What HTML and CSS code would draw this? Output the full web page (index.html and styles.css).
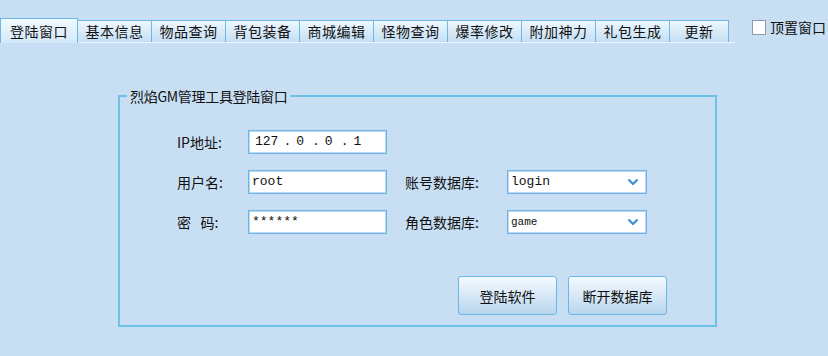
FILE: index.html
```html
<!DOCTYPE html>
<html lang="zh-CN">
  <head>
    <meta charset="UTF-8" />
    <meta name="viewport" content="width=device-width, initial-scale=1.0" />
    <title>烈焰GM管理工具</title>
    <link rel="stylesheet" href="styles.css">
  </head>

  <body>
    <div class="main">
      <div class="topbar">
        <div class="tabs">
          <div class="tab active">登陆窗口</div>
          <div class="tab">基本信息</div>
          <div class="tab">物品查询</div>
          <div class="tab">背包装备</div>
          <div class="tab">商城编辑</div>
          <div class="tab">怪物查询</div>
          <div class="tab">爆率修改</div>
          <div class="tab">附加神力</div>
          <div class="tab">礼包生成</div>
          <div class="tab short">更新</div>
        </div>
        <label class="pin">
          <span class="box"></span>
          <span>顶置窗口</span>
        </label>
      </div>

      <fieldset class="group">
        <legend>烈焰GM管理工具登陆窗口</legend>
        <div class="inner">
          <div class="row first">
            <div class="label">IP地址:</div>
            <div class="field ip">
              <span>127</span><span class="dot">.</span><span class="oct">0</span><span class="dot">.</span><span class="oct">0</span><span class="dot">.</span><span class="oct">1</span>
            </div>
          </div>
          <div class="row">
            <div class="label">用户名:</div>
            <div class="field">root</div>
            <div class="label wide">账号数据库:</div>
            <div class="field combo">
              <span>login</span>
              <svg width="12" height="8" viewBox="0 0 12 8"><path d="M1.5 1.5 L6 6 L10.5 1.5" fill="none" stroke="#3d8fd6" stroke-width="2.2"/></svg>
            </div>
          </div>
          <div class="row">
            <div class="label">密&nbsp;&nbsp;&nbsp;码:</div>
            <div class="field">******</div>
            <div class="label wide">角色数据库:</div>
            <div class="field combo">
              <span class="small">game</span>
              <svg width="12" height="8" viewBox="0 0 12 8"><path d="M1.5 1.5 L6 6 L10.5 1.5" fill="none" stroke="#3d8fd6" stroke-width="2.2"/></svg>
            </div>
          </div>
          <div class="buttons">
            <button class="btn">登陆软件</button>
            <button class="btn">断开数据库</button>
          </div>
        </div>
      </fieldset>
    </div>
  </body>
</html>
```

FILE: styles.css
```css
* {
  padding: 0;
  margin: 0;
  box-sizing: border-box;
}

body {
  background-color: #c8dff3;
  font-family: "Noto Sans CJK SC", "Noto Sans", sans-serif;
  font-size: 14px;
  color: #111;
}

.main {
  width: 828px;
  height: 356px;
  overflow: hidden;
}

.topbar {
  display: flex;
  align-items: flex-end;
  padding-top: 17px;
}

.tabs {
  display: flex;
  align-items: flex-end;
  width: 735px;
  height: 26px;
  border-bottom: 1px solid #eef6fd;
}

.tab {
  width: 75px;
  height: 22px;
  line-height: 20px;
  text-align: center;
  border: 1px solid #6ab8e6;
  border-bottom: none;
  background: linear-gradient(#eef7fe, #c3def3);
  margin-right: -1px;
  letter-spacing: 0.5px;
}

.tab.active {
  width: 78px;
  height: 25px;
  line-height: 25px;
  background: linear-gradient(#f2f9ff, #d3e8f8);
  position: relative;
  z-index: 1;
  margin-bottom: -1px;
}

.tab.short {
  width: 60px;
}

.pin {
  display: flex;
  align-items: center;
  margin-left: 17px;
  height: 26px;
  gap: 4px;
  padding-bottom: 6px;
}

.pin .box {
  width: 14px;
  height: 15px;
  background: #fff;
  border: 1px solid #8a9aaa;
}

.group {
  margin: 43px 0 0 118px;
  width: 599px;
  height: 241px;
  border: 2px solid #6ec2ea;
  padding: 0;
}

.group legend {
  margin-left: 7px;
  padding: 0 3px;
  line-height: 20px;
  letter-spacing: -0.3px;
}

.inner {
  padding-left: 57px;
}

.row {
  display: flex;
  align-items: center;
  height: 24px;
  margin-top: 16px;
}

.row.first {
  margin-top: 24px;
  margin-bottom: 3px;
}

.label {
  width: 71px;
}

.label.wide {
  width: 102px;
  margin-left: 18px;
}

.field {
  width: 139px;
  height: 24px;
  background: #fff;
  border: 1px solid #6fb3e3;
  box-shadow: inset 0 0 0 1px #b9dbf4;
  font-family: "Liberation Mono", monospace;
  font-size: 13px;
  line-height: 22px;
  padding-left: 3px;
  white-space: nowrap;
}

.field.ip {
  display: flex;
  padding-left: 6px;
}

.ip .dot {
  margin-left: 5px;
}

.ip .dot + .oct {
  margin-left: 5px;
}

.ip .oct + .dot {
  margin-left: 8px;
}

.field.combo {
  width: 140px;
  display: flex;
  align-items: center;
  justify-content: space-between;
  padding-right: 7px;
}

.small {
  font-size: 11px;
}

.buttons {
  display: flex;
  gap: 11px;
  margin: 42px 0 0 281px;
}

.btn {
  width: 99px;
  height: 39px;
  font-family: "Noto Sans CJK SC", sans-serif;
  font-size: 14px;
  color: #111;
  border: 1px solid #6ab8e6;
  border-radius: 3px;
  background: linear-gradient(#f5faff, #b9d6ee);
}
```
